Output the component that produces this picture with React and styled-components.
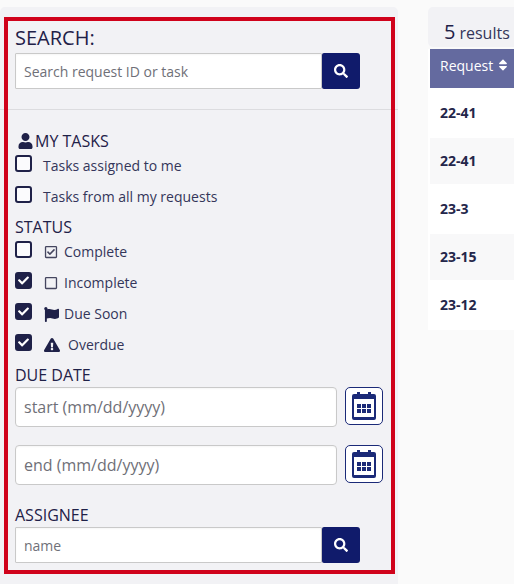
import React from "react";
import styled, { createGlobalStyle } from "styled-components";
import { FaUser, FaSearch, FaRegCheckSquare, FaRegSquare, FaFlag, FaExclamationTriangle, FaSort, FaCheck } from "react-icons/fa";

const Global = createGlobalStyle`
  html, body { margin: 0; padding: 0; background: #fafafa; }
  body { font-family: "Open Sans", "Liberation Sans", sans-serif; color: #1f2148; overflow: hidden; }
  * { box-sizing: border-box; }
`;
const Page = styled.div`
  display: flex; align-items: flex-start; width: 514px; height: 584px; padding-top: 7px; overflow: hidden;
`;
const Sidebar = styled.aside`
  flex: 0 0 398px; min-width: 0; height: 577px; background: #f2f2f5; border-radius: 5px 5px 0 0; padding: 10px 3px 0 4px;
`;
const Filters = styled.form`
  height: 557px; outline: 4px solid #d0021b; outline-offset: -4px; padding: 8px 0 0 11px; margin: 0;
`;
const Heading = styled.div`
  font-size: ${p => p.$size || 16}px; line-height: ${p => p.$lh || 22}px; color: #1f2148;
  margin-top: ${p => p.$top || 0}px; margin-bottom: ${p => p.$bottom || 0}px;
`;
const InputRow = styled.div`
  display: flex; align-items: flex-start; margin-top: ${p => p.$top || 0}px;
`;
const TextInput = styled.input`
  width: 307px; height: 36px; border: 1px solid #c9c9c9; background: #fff; padding: 0 8px;
  font: 14px "Open Sans", sans-serif; border-radius: 1px; box-shadow: inset 0 1px 2px rgba(0,0,0,.04);
  &::placeholder { color: #6f7078; opacity: 1; }
`;
const SearchButton = styled.button`
  width: 38px; height: 36px; background: #101b6b; color: #fff; border: 0; border-radius: 2px 3px 3px 2px;
  display: flex; align-items: center; justify-content: center; padding: 0; font-size: 14px;
`;
const Divider = styled.hr`
  border: 0; height: 1px; background: #dcdcdf; margin: 20px 0 0 -15px; width: 398px;
`;
const TaskHeading = styled(Heading)`
  display: flex; align-items: center; margin-top: 20px; margin-bottom: 3px; gap: 2px;
  svg { margin-left: 3px; width: 15px; height: 16px; }
`;
const CheckRow = styled.label`
  display: flex; align-items: flex-start; height: ${p => p.$h || 31}px; font-size: 14px; line-height: 20px; color: #34365a;
`;
const Box = styled.span`
  width: 17px; height: 17px; flex: none; border-radius: 3px; border: 2px solid #1f2148;
  background: ${p => p.$on ? "#1f2148" : "#fbfbfd"}; color: #fff; display: flex; align-items: center; justify-content: center;
  font-size: 11px;
`;
const RowText = styled.span`
  display: flex; align-items: center; margin-left: ${p => p.$left || 11}px; margin-top: 1px;
`;
const StatusIcon = styled.span`
  display: inline-flex; width: ${p => p.$w || 20}px; font-size: ${p => p.$icon || 14}px; color: ${p => p.$muted ? "#45465f" : "#1f2148"};
`;
const DateInput = styled(TextInput)`
  width: 322px; height: 40px; border-radius: 4px; font-size: 16px;
`;
const CalendarButton = styled.button`
  width: 38px; height: 38px; margin-left: 8px; background: #fff; border: 1px solid #1b2a78; border-radius: 5px;
  display: flex; align-items: center; justify-content: center; padding: 0; color: #1b2a78;
`;
const Results = styled.main`
  margin-left: 30px; flex: 0 0 86px; min-width: 0;
`;
const Count = styled.div`
  height: 40px; background: #f2f2f5; border-radius: 5px 0 0 5px; padding: 10px 0 0 16px; font-size: 16px; line-height: 30px; color: #34365a;
  white-space: nowrap; display: flex; align-items: baseline; gap: 4px;
  b { font-weight: 500; font-size: 20px; color: #1f2148; }
`;
const Table = styled.div`
  margin-top: 2px; background: #fff; padding-left: 2px; height: 281px;
`;
const HeaderCell = styled.div`
  height: 39px; background: #646a9f; color: #fff; font-size: 14px; padding: 0 0 7px 10px; display: flex; align-items: center; gap: 3px;
  svg { font-size: 14px; }
  white-space: nowrap;
`;
const Row = styled.div`
  height: ${p => p.$h}px; background: ${p => p.$odd ? "#f8f8f9" : "#fff"}; font-size: 14px; font-weight: 700; color: #24264a;
  padding: 0 0 2px 10px; display: flex; align-items: center;
`;

const Calendar = () => (
  <svg width="24" height="28" viewBox="0 0 24 28" fill="currentColor">
    <path fillRule="evenodd" d="M5 0h3v2h8V0h3v2h3a2 2 0 0 1 2 2v22a2 2 0 0 1-2 2H2a2 2 0 0 1-2-2V4a2 2 0 0 1 2-2h3zM2 7v18h20V7z" />
    <rect x="5" y="12" width="4" height="4" /><rect x="10" y="12" width="4" height="4" /><rect x="15" y="12" width="4" height="4" />
    <rect x="5" y="17" width="4" height="4" /><rect x="10" y="17" width="4" height="4" /><rect x="15" y="17" width="4" height="4" />
  </svg>
);

const Check = ({ on, h, children }) => (
  <CheckRow $h={h}>
    <Box $on={on}>{on && <FaCheck />}</Box>
    {children}
  </CheckRow>
);

export default function App() {
  return (
    <>
      <Global />
      <Page>
        <Sidebar>
          <Filters onSubmit={e => e.preventDefault()}>
            <Heading $size={20} $lh={26}>SEARCH:</Heading>
            <InputRow $top={2}>
              <TextInput placeholder="Search request ID or task" />
              <SearchButton type="button" aria-label="Search"><FaSearch /></SearchButton>
            </InputRow>
            <Divider />
            <TaskHeading><FaUser />MY TASKS</TaskHeading>
            <Check><RowText>Tasks assigned to me</RowText></Check>
            <Check><RowText>Tasks from all my requests</RowText></Check>
            <Heading $top={-1} $bottom={3}>STATUS</Heading>
            <Check><RowText $left={12}><StatusIcon $muted><FaRegCheckSquare /></StatusIcon>Complete</RowText></Check>
            <Check on><RowText $left={12}><StatusIcon $muted><FaRegSquare /></StatusIcon>Incomplete</RowText></Check>
            <Check on><RowText $left={12}><StatusIcon $icon={15}><FaFlag /></StatusIcon>Due Soon</RowText></Check>
            <Check on h={30}><RowText $left={12}><StatusIcon $w={24} $icon={16}><FaExclamationTriangle /></StatusIcon>Overdue</RowText></Check>
            <Heading>DUE DATE</Heading>
            <InputRow $top={1}>
              <DateInput placeholder="start (mm/dd/yyyy)" />
              <CalendarButton type="button" aria-label="Pick start date"><Calendar /></CalendarButton>
            </InputRow>
            <InputRow $top={18}>
              <DateInput placeholder="end (mm/dd/yyyy)" />
              <CalendarButton type="button" aria-label="Pick end date"><Calendar /></CalendarButton>
            </InputRow>
            <Heading $top={19}>ASSIGNEE</Heading>
            <InputRow $top={1}>
              <TextInput placeholder="name" />
              <SearchButton type="button" aria-label="Search assignee"><FaSearch /></SearchButton>
            </InputRow>
          </Filters>
        </Sidebar>
        <Results>
          <Count><b>5</b>results</Count>
          <Table>
            <HeaderCell>Request <FaSort /></HeaderCell>
            <Row $h={50}>22-41</Row>
            <Row $h={46} $odd>22-41</Row>
            <Row $h={50}>23-3</Row>
            <Row $h={46} $odd>23-15</Row>
            <Row $h={50}>23-12</Row>
          </Table>
        </Results>
      </Page>
    </>
  );
}
